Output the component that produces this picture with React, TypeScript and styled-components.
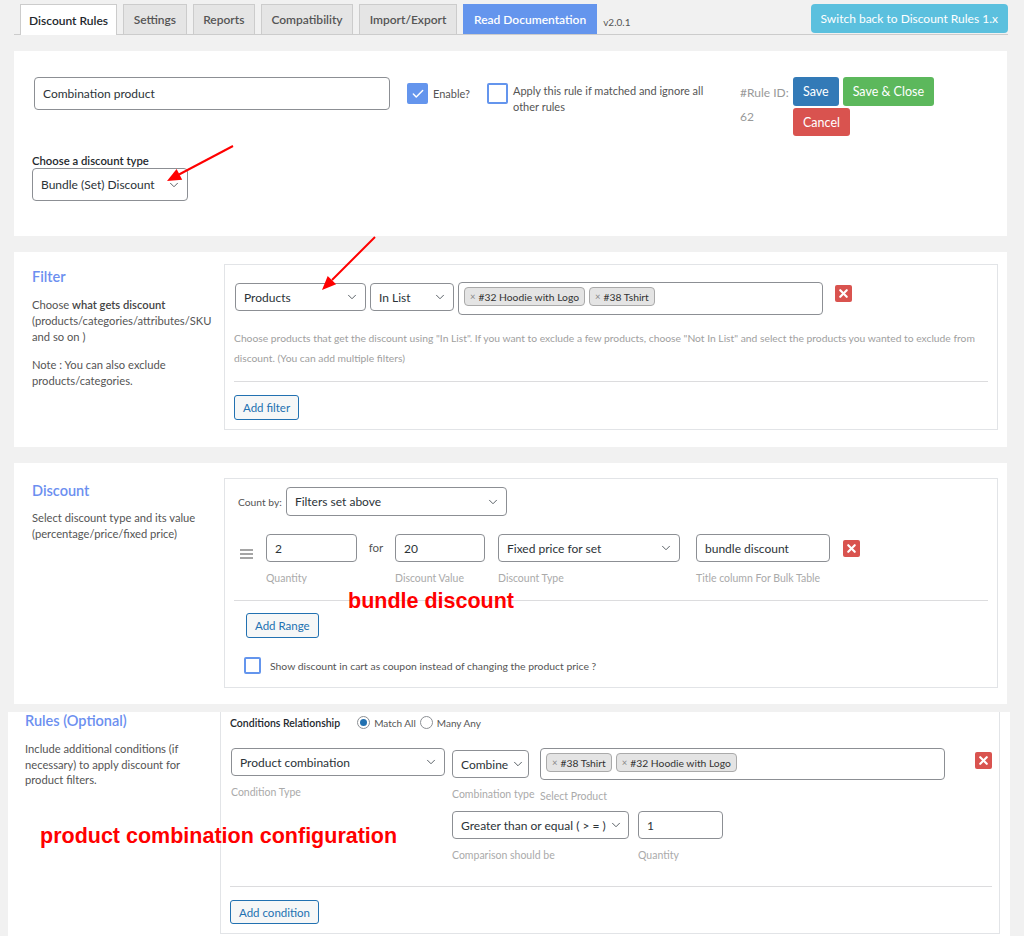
import React from 'react';
import styled, { createGlobalStyle, css } from 'styled-components';
import { ChevronDown, X, Check } from 'lucide-react';

const Global = createGlobalStyle`
  html, body { margin: 0; padding: 0; background: #f1f1f1; }
  body { font-family: "Segoe UI", Lato, "Open Sans", sans-serif; color: #444; }
  * { box-sizing: border-box; }
`;

const Page = styled.div`
  position: relative;
  width: 1024px;
  height: 936px;
  overflow: hidden;
  padding-top: 4px;
`;

/* ---------- tabs ---------- */
const TabBar = styled.div`
  display: flex;
  align-items: flex-end;
  height: 31px;
  margin: 0 16px 0 14px;
  padding-left: 6px;
  border-bottom: 1px solid #ccc;
`;

const Tab = styled.div<{ $variant?: 'active' | 'doc' }>`
  height: 30px;
  display: flex;
  align-items: center;
  padding: 0 9.5px;
  margin-right: 6px;
  border: 1px solid #ccc;
  border-bottom: none;
  background: #e5e5e5;
  color: #555;
  font-size: 12px;
  font-weight: 600;
  white-space: nowrap;
  ${(p) =>
    p.$variant === 'active' &&
    css`
      background: #fff;
      color: #23282d;
      height: 31px;
      margin-bottom: -1px;
      padding: 0 8px;
    `}
  ${(p) =>
    p.$variant === 'doc' &&
    css`
      background: #6495ed;
      border-color: #6495ed;
      color: #fff;
      padding: 0 10px;
    `}
`;

const Version = styled.span`
  font-size: 10px;
  color: #555;
  align-self: center;
  padding-top: 6px;
`;

const SwitchButton = styled.div`
  margin-left: auto;
  align-self: flex-start;
  height: 29px;
  display: flex;
  align-items: center;
  padding: 0 10px;
  background: #5bc0de;
  border-radius: 4px;
  color: #fff;
  font-size: 12px;
  white-space: nowrap;
`;

/* ---------- panels ---------- */
const Panel = styled.div`
  background: #fff;
  margin: 16px 17px 0 14px;
`;

const TopPanel = styled(Panel)`
  padding: 26px 20px 35px 18px;
`;

const SectionPanel = styled(Panel)<{ $top: number; $bottom: number }>`
  display: grid;
  grid-template-columns: 210px 1fr;
  padding: ${(p) => p.$top}px 9px ${(p) => p.$bottom}px 0;
`;

const RulesPanel = styled.div`
  background: #fff;
  margin: 8px 14px 0 8px;
  height: 224px;
  display: grid;
  grid-template-columns: 212px 1fr;
  padding: 0 10px 2px 0;
`;

const Side = styled.div<{ $left?: number; $top?: number }>`
  padding: ${(p) => p.$top ?? 4}px 12px 0 ${(p) => p.$left ?? 18}px;
`;

const SideTitle = styled.div`
  font-size: 14.5px;
  line-height: 18px;
  font-weight: 600;
  color: #6c8ff0;
`;

const SideText = styled.p<{ $lh?: number; $mt?: number }>`
  margin: ${(p) => p.$mt ?? 11}px 0 0;
  font-size: 11.2px;
  line-height: ${(p) => p.$lh ?? 16}px;
  color: #555;
  b { font-weight: 600; color: #444; }
`;

const Box = styled.div<{ $pad: string; $noTop?: boolean }>`
  border: 1px solid #e2e4e7;
  ${(p) => p.$noTop && 'border-top: none;'}
  padding: ${(p) => p.$pad};
  display: flex;
  flex-direction: column;
  align-items: flex-start;
`;

/* ---------- controls ---------- */
const SelectBox = styled.div<{ $w: number; $h?: number; $mt?: number; $ml?: number; $tight?: boolean }>`
  width: ${(p) => p.$w}px;
  height: ${(p) => p.$h ?? 28}px;
  margin-top: ${(p) => p.$mt ?? 0}px;
  margin-left: ${(p) => p.$ml ?? 0}px;
  flex: none;
  display: flex;
  align-items: center;
  justify-content: ${(p) => (p.$tight ? 'flex-start' : 'space-between')};
  gap: 3px;
  padding: 0 6px 0 8px;
  border: 1px solid #8c8f94;
  border-radius: 4px;
  background: #fff;
  color: #2c3338;
  font-size: 12px;
  white-space: nowrap;
  overflow: hidden;
  svg { flex: none; color: #50575e; }
`;

const Select = ({
  w,
  h,
  mt,
  ml,
  tight,
  children,
}: {
  w: number;
  h?: number;
  mt?: number;
  ml?: number;
  tight?: boolean;
  children: React.ReactNode;
}) => (
  <SelectBox $w={w} $h={h} $mt={mt} $ml={ml} $tight={tight}>
    <span>{children}</span>
    <ChevronDown size={14} strokeWidth={1.6} />
  </SelectBox>
);

const TextInput = styled.input<{ $w: number; $h?: number; $ml?: number }>`
  width: ${(p) => p.$w}px;
  height: ${(p) => p.$h ?? 28}px;
  margin-left: ${(p) => p.$ml ?? 0}px;
  flex: none;
  padding: 0 8px;
  border: 1px solid #8c8f94;
  border-radius: 4px;
  background: #fff;
  color: #2c3338;
  font-family: inherit;
  font-size: 12px;
  outline: none;
`;

const TagsBox = styled.div<{ $w: number; $h?: number; $ml?: number; $mt?: number }>`
  width: ${(p) => p.$w}px;
  height: ${(p) => p.$h ?? 33}px;
  margin-left: ${(p) => p.$ml ?? 0}px;
  margin-top: ${(p) => p.$mt ?? 0}px;
  flex: none;
  display: flex;
  align-items: flex-start;
  gap: 4px;
  padding: 4px 5px;
  border: 1px solid #8c8f94;
  border-radius: 4px;
  background: #fff;
`;

const Tag = styled.span`
  height: 19px;
  display: inline-flex;
  align-items: center;
  padding: 0 5px;
  border: 1px solid #aaa;
  border-radius: 4px;
  background: #e4e4e4;
  color: #333;
  font-size: 10.3px;
  white-space: nowrap;
  i { font-style: normal; color: #888; margin-right: 3px; font-size: 9.5px; }
`;

const RemoveButton = styled.div<{ $ml?: string; $mt?: number }>`
  width: 17px;
  height: 17px;
  flex: none;
  margin-left: ${(p) => p.$ml ?? '12px'};
  margin-top: ${(p) => p.$mt ?? 3}px;
  display: flex;
  align-items: center;
  justify-content: center;
  background: #d9534f;
  border-radius: 2px;
  color: #fff;
`;

const Remove = ({ ml, mt }: { ml?: string; mt?: number }) => (
  <RemoveButton $ml={ml} $mt={mt}>
    <X size={13} strokeWidth={4} />
  </RemoveButton>
);

const OutlineButton = styled.div<{ $ml?: number; $h?: number }>`
  height: ${(p) => p.$h ?? 25}px;
  margin-left: ${(p) => p.$ml ?? 0}px;
  display: inline-flex;
  align-items: center;
  padding: 0 8px;
  border: 1px solid #2271b1;
  border-radius: 3px;
  background: #f6f7f7;
  color: #2271b1;
  font-size: 11.5px;
  white-space: nowrap;
`;

const CheckSquare = styled.div<{ $checked?: boolean; $size?: number }>`
  width: ${(p) => p.$size ?? 21}px;
  height: ${(p) => p.$size ?? 21}px;
  flex: none;
  border: 2px solid #6495ed;
  border-radius: 2px;
  background: ${(p) => (p.$checked ? '#6495ed' : '#fff')};
  display: flex;
  align-items: center;
  justify-content: center;
  color: #fff;
`;

const Divider = styled.div<{ $mt: number; $mb: number }>`
  align-self: stretch;
  border-top: 1px solid #dcdcde;
  margin: ${(p) => p.$mt}px 0 ${(p) => p.$mb}px;
`;

const Row = styled.div<{ $mt?: number; $ml?: number; $align?: string }>`
  display: flex;
  align-items: ${(p) => p.$align ?? 'flex-start'};
  margin-top: ${(p) => p.$mt ?? 0}px;
  margin-left: ${(p) => p.$ml ?? 0}px;
  align-self: stretch;
`;

const InlineGroup = styled.div<{ $ml: number }>`
  display: flex;
  align-items: flex-start;
  flex: none;
  margin: 6px 0 0 ${(p) => p.$ml}px;
`;

const Field = styled.div<{ $ml?: number }>`
  display: flex;
  flex-direction: column;
  margin-left: ${(p) => p.$ml ?? 0}px;
`;

const FieldLabel = styled.div<{ $mt?: number; $float?: boolean }>`
  margin-top: ${(p) => p.$mt ?? 9}px;
  font-size: 10.5px;
  line-height: 14px;
  color: #aaa;
  white-space: nowrap;
  ${(p) => p.$float && 'width: 0; overflow: visible;'}
`;

/* ---------- top panel parts ---------- */
const SmallText = styled.span<{ $ml?: number; $w?: number; $mt?: number }>`
  margin-left: ${(p) => p.$ml ?? 5}px;
  margin-top: ${(p) => p.$mt ?? 0}px;
  ${(p) => p.$w && `width: ${p.$w}px;`}
  font-size: 11px;
  line-height: 16px;
  color: #555;
`;

const RuleId = styled.div`
  width: 53px;
  margin: 4px 0 0 30px;
  font-size: 12px;
  line-height: 24px;
  color: #999;
`;

const ActionGrid = styled.div`
  display: flex;
  flex-wrap: wrap;
  width: 146px;
  gap: 2px 4px;
`;

const ActionButton = styled.div<{ $color: string; $h?: number }>`
  height: ${(p) => p.$h ?? 29}px;
  display: flex;
  align-items: center;
  padding: 0 10px;
  background: ${(p) => p.$color};
  border-radius: 3px;
  color: #fff;
  font-size: 12.5px;
  white-space: nowrap;
`;

const FieldTitle = styled.div`
  margin: 18px 0 0;
  font-size: 11.3px;
  line-height: 14px;
  font-weight: 600;
  color: #23282d;
`;

const HelpText = styled.div`
  margin-top: 13px;
  font-size: 10.3px;
  line-height: 20px;
  color: #a0a0a0;
`;

const CountLabel = styled.span`
  font-size: 10.3px;
  color: #555;
  margin: 0 4px 0 4px;
`;

const ForText = styled.span`
  width: 38px;
  text-align: center;
  line-height: 28px;
  font-size: 11.5px;
  color: #555;
`;

const Handle = styled.div`
  width: 32px;
  padding: 9px 0 0 6px;
  color: #777;
`;

const CouponText = styled.span`
  margin-left: 9px;
  font-size: 10.4px;
  color: #555;
`;

/* ---------- rules ---------- */
const RelRow = styled.div`
  display: flex;
  align-items: center;
  margin-top: 4px;
  font-size: 10px;
  color: #555;
`;

const RelTitle = styled.span`
  font-size: 10.5px;
  font-weight: 600;
  color: #23282d;
  margin-right: 17px;
`;

const Radio = styled.span<{ $on?: boolean }>`
  width: 13px;
  height: 13px;
  border-radius: 50%;
  border: 1px solid #8c8f94;
  display: inline-flex;
  align-items: center;
  justify-content: center;
  margin-right: 4px;
  &::after {
    content: '';
    width: 7px;
    height: 7px;
    border-radius: 50%;
    background: ${(p) => (p.$on ? '#2271b1' : 'transparent')};
  }
`;

const RadioText = styled.span`
  margin-right: 4px;
`;

const SubColumn = styled.div`
  display: flex;
  flex-direction: column;
  margin-left: 7px;
`;

/* ---------- annotations overlay ---------- */
const Overlay = styled.svg`
  position: absolute;
  left: 0;
  top: 0;
  pointer-events: none;
`;

const Annotation = styled.div<{ $x: number; $y: number }>`
  position: absolute;
  left: ${(p) => p.$x}px;
  top: ${(p) => p.$y}px;
  font-family: "Liberation Sans", Arial, sans-serif;
  font-weight: 700;
  font-size: 21.5px;
  line-height: 24px;
  color: #ff0000;
  white-space: nowrap;
  pointer-events: none;
`;

export default function App() {
  return (
    <>
      <Global />
      <Page>
        <TabBar>
          <Tab $variant="active">Discount Rules</Tab>
          <Tab>Settings</Tab>
          <Tab>Reports</Tab>
          <Tab>Compatibility</Tab>
          <Tab>Import/Export</Tab>
          <Tab $variant="doc">Read Documentation</Tab>
          <Version>v2.0.1</Version>
          <SwitchButton>Switch back to Discount Rules 1.x</SwitchButton>
        </TabBar>

        <TopPanel>
          <Row>
            <TextInput $w={356} $h={33} $ml={2} readOnly value="Combination product" />
            <InlineGroup $ml={17}>
              <CheckSquare $checked>
                <Check size={14} strokeWidth={2.5} />
              </CheckSquare>
              <SmallText $mt={3}>Enable?</SmallText>
            </InlineGroup>
            <InlineGroup $ml={17}>
              <CheckSquare />
              <SmallText $w={197}>Apply this rule if matched and ignore all other rules</SmallText>
            </InlineGroup>
            <RuleId>
              #Rule ID:
              <br />
              62
            </RuleId>
            <ActionGrid>
              <ActionButton $color="#337ab7">Save</ActionButton>
              <ActionButton $color="#5cb85c">Save &amp; Close</ActionButton>
              <ActionButton $color="#d9534f" $h={28}>
                Cancel
              </ActionButton>
            </ActionGrid>
          </Row>
          <FieldTitle>Choose a discount type</FieldTitle>
          <Select w={156} h={33}>
            Bundle (Set) Discount
          </Select>
        </TopPanel>

        <SectionPanel $top={12} $bottom={17}>
          <Side>
            <SideTitle>Filter</SideTitle>
            <SideText>
              Choose <b>what gets discount</b> (products/categories/attributes/SKU and so on )
            </SideText>
            <SideText $mt={12}>Note : You can also exclude products/categories.</SideText>
          </Side>
          <Box $pad="18px 9px 9px 9px">
            <Row $ml={1}>
              <Select w={131}>Products</Select>
              <Select w={84} ml={4}>
                In List
              </Select>
              <TagsBox $w={365} $ml={4} $mt={-1}>
                <Tag>
                  <i>×</i>#32 Hoodie with Logo
                </Tag>
                <Tag>
                  <i>×</i>#38 Tshirt
                </Tag>
              </TagsBox>
              <Remove ml="12px" mt={2} />
            </Row>
            <HelpText>
              Choose products that get the discount using "In List". If you want to exclude a few products, choose "Not In
              List" and select the products you wanted to exclude from discount. (You can add multiple filters)
            </HelpText>
            <Divider $mt={13} $mb={13} />
            <OutlineButton>Add filter</OutlineButton>
          </Box>
        </SectionPanel>

        <SectionPanel $top={15} $bottom={16}>
          <Side>
            <SideTitle>Discount</SideTitle>
            <SideText $mt={10}>Select discount type and its value (percentage/price/fixed price)</SideText>
          </Side>
          <Box $pad="8px 9px 13px 9px">
            <Row $align="center">
              <CountLabel>Count by:</CountLabel>
              <Select w={221} h={29}>
                Filters set above
              </Select>
            </Row>
            <Row $mt={18}>
              <Handle>
                <svg width="13" height="10" viewBox="0 0 13 10">
                  <path d="M0 1h13M0 5h13M0 9h13" stroke="#888" strokeWidth="1.4" />
                </svg>
              </Handle>
              <Field>
                <TextInput $w={91} readOnly value="2" />
                <FieldLabel>Quantity</FieldLabel>
              </Field>
              <ForText>for</ForText>
              <Field>
                <TextInput $w={90} readOnly value="20" />
                <FieldLabel>Discount Value</FieldLabel>
              </Field>
              <Field $ml={13}>
                <Select w={182}>Fixed price for set</Select>
                <FieldLabel>Discount Type</FieldLabel>
              </Field>
              <Field $ml={16}>
                <TextInput $w={134} readOnly value="bundle discount" />
                <FieldLabel>Title column For Bulk Table</FieldLabel>
              </Field>
              <Remove ml="13px" mt={6} />
            </Row>
            <Divider $mt={15} $mb={12} />
            <OutlineButton $ml={12}>Add Range</OutlineButton>
            <Row $mt={19} $ml={10} $align="center">
              <CheckSquare $size={17} />
              <CouponText>Show discount in cart as coupon instead of changing the product price ?</CouponText>
            </Row>
          </Box>
        </SectionPanel>

        <RulesPanel>
          <Side $left={17} $top={0}>
            <SideTitle>Rules (Optional)</SideTitle>
            <SideText $mt={11} $lh={15.5}>
              Include additional conditions (if necessary) to apply discount for product filters.
            </SideText>
          </Side>
          <Box $pad="0 7px 8px 9px" $noTop>
            <RelRow>
              <RelTitle>Conditions Relationship</RelTitle>
              <Radio $on />
              <RadioText>Match All</RadioText>
              <Radio />
              <RadioText>Many Any</RadioText>
            </RelRow>
            <Row $mt={19} $ml={1}>
              <Field>
                <Select w={214}>Product combination</Select>
                <FieldLabel>Condition Type</FieldLabel>
              </Field>
              <SubColumn>
                <Row>
                  <Field>
                    <Select w={77} mt={2} tight>
                      Combine
                    </Select>
                    <FieldLabel $float>Combination type</FieldLabel>
                  </Field>
                  <Field $ml={11}>
                    <TagsBox $w={405} $h={32}>
                      <Tag>
                        <i>×</i>#38 Tshirt
                      </Tag>
                      <Tag>
                        <i>×</i>#32 Hoodie with Logo
                      </Tag>
                    </TagsBox>
                    <FieldLabel $mt={9}>Select Product</FieldLabel>
                  </Field>
                </Row>
                <Row $mt={8}>
                  <Field>
                    <Select w={177} tight>
                      Greater than or equal ( &gt; = )
                    </Select>
                    <FieldLabel>Comparison should be</FieldLabel>
                  </Field>
                  <Field $ml={9}>
                    <TextInput $w={85} readOnly value="1" />
                    <FieldLabel>Quantity</FieldLabel>
                  </Field>
                </Row>
              </SubColumn>
              <Remove ml="auto" mt={4} />
            </Row>
            <Divider $mt={24} $mb={13} />
            <OutlineButton $h={24}>Add condition</OutlineButton>
          </Box>
        </RulesPanel>

        <Overlay width={1024} height={936} viewBox="0 0 1024 936">
          <line x1="233" y1="146" x2="179" y2="174.5" stroke="#f00" strokeWidth="2" />
          <polygon points="167,181 176.6,169.1 182.2,179.7" fill="#f00" />
          <line x1="375" y1="237" x2="332" y2="280" stroke="#f00" strokeWidth="2" />
          <polygon points="322,290 327.7,275.9 336.1,284.3" fill="#f00" />
        </Overlay>
        <Annotation $x={348} $y={589}>
          bundle discount
        </Annotation>
        <Annotation $x={40} $y={824}>
          product combination configuration
        </Annotation>
      </Page>
    </>
  );
}
